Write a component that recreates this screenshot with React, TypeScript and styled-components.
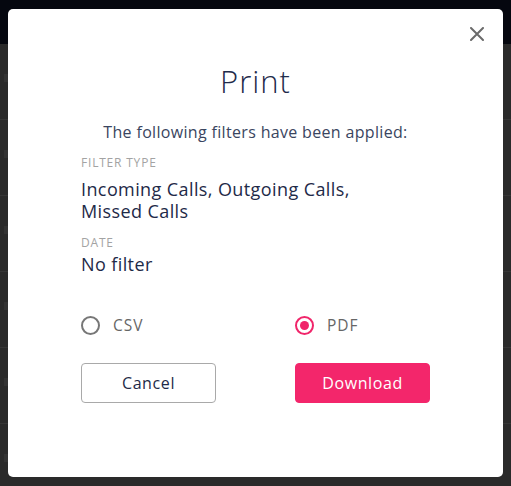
import styled, { createGlobalStyle } from "styled-components";

const GlobalStyle = createGlobalStyle`
  * { box-sizing: border-box; }
  html, body { margin: 0; padding: 0; background: #2a2a2a; }
  body { font-family: "Open Sans", "Liberation Sans", sans-serif; }
`;

const Page = styled.div`
  height: 486px;
  overflow: hidden;
  background: #2a2a2a;
`;

const Header = styled.div`
  height: 44px;
  background: #05070f;
`;

const Row = styled.div`
  height: 76px;
  border-bottom: 1px solid #363636;
  padding: 30px 0 0 4px;
`;

const RowMark = styled.div`
  width: 4px;
  height: 8px;
  background: #333;
`;

const Overlay = styled.div`
  position: fixed;
  inset: 0;
  padding: 9px 8px 0;
`;

const Modal = styled.div`
  position: relative;
  height: 468px;
  background: #fff;
  border-radius: 5px;
  padding: 53px 73px 0;
  color: #1e2a48;
`;

const Close = styled.button`
  position: absolute;
  top: 16px;
  right: 17px;
  width: 18px;
  height: 18px;
  padding: 0;
  border: none;
  background: none;
  cursor: pointer;
  display: flex;
  align-items: center;
  justify-content: center;
`;

const Title = styled.h1`
  margin: 0;
  text-align: center;
  font-size: 31px;
  line-height: 38px;
  font-weight: 300;
  letter-spacing: 1px;
  color: #1f2b4b;
`;

const Subtitle = styled.p`
  margin: 22px 0 0;
  text-align: center;
  font-size: 16px;
  line-height: 20px;
  letter-spacing: 0.33px;
  color: #3a4560;
`;

const Label = styled.div<{ $gap: number }>`
  margin-top: ${(p) => p.$gap}px;
  font-size: 12px;
  line-height: 16px;
  letter-spacing: 0.8px;
  text-transform: uppercase;
  color: #a3a3a3;
`;

const Value = styled.div<{ $gap: number }>`
  margin-top: ${(p) => p.$gap}px;
  font-size: 18px;
  line-height: 22px;
  letter-spacing: 0.4px;
  color: #1e2a48;
`;

const Grid = styled.div<{ $top: number }>`
  display: grid;
  grid-template-columns: 1fr 1fr;
  column-gap: 79px;
  margin-top: ${(p) => p.$top}px;
`;

const RadioLabel = styled.label`
  display: flex;
  align-items: center;
  gap: 13px;
  height: 20px;
  font-size: 15.5px;
  letter-spacing: 1px;
  color: #666;
  cursor: pointer;
`;

const Circle = styled.span<{ $on: boolean }>`
  width: 19px;
  height: 19px;
  border-radius: 50%;
  border: 2px solid ${(p) => (p.$on ? "#f0256a" : "#777")};
  display: flex;
  align-items: center;
  justify-content: center;
  &::after {
    content: "";
    width: 9px;
    height: 9px;
    border-radius: 50%;
    background: ${(p) => (p.$on ? "#f0256a" : "transparent")};
  }
`;

const Button = styled.button<{ $primary?: boolean }>`
  height: 40px;
  border-radius: 4px;
  font-family: inherit;
  font-size: 16px;
  letter-spacing: 0.6px;
  cursor: pointer;
  border: 1px solid ${(p) => (p.$primary ? "#f3266b" : "#a9a9a9")};
  background: ${(p) => (p.$primary ? "#f3266b" : "#fff")};
  color: ${(p) => (p.$primary ? "#fff" : "#1e2a48")};
`;

export default function App() {
  return (
    <>
      <GlobalStyle />
      <Page>
        <Header />
        {[0, 1, 2, 3, 4, 5].map((i) => (
          <Row key={i}>
            <RowMark />
          </Row>
        ))}
      </Page>
      <Overlay>
        <Modal>
          <Close aria-label="Close">
            <svg width="14" height="14" viewBox="0 0 14 14">
              <path d="M1 1L13 13M13 1L1 13" stroke="#6b6b6b" strokeWidth="2" strokeLinecap="round" />
            </svg>
          </Close>
          <Title>Print</Title>
          <Subtitle>The following filters have been applied:</Subtitle>
          <Label $gap={13}>Filter type</Label>
          <Value $gap={7}>
            Incoming Calls, Outgoing Calls,
            <br />
            Missed Calls
          </Value>
          <Label $gap={13}>Date</Label>
          <Value $gap={2}>No filter</Value>
          <Grid $top={40}>
            <RadioLabel>
              <Circle $on={false} />
              CSV
            </RadioLabel>
            <RadioLabel>
              <Circle $on={true} />
              PDF
            </RadioLabel>
          </Grid>
          <Grid $top={28}>
            <Button>Cancel</Button>
            <Button $primary>Download</Button>
          </Grid>
        </Modal>
      </Overlay>
    </>
  );
}
